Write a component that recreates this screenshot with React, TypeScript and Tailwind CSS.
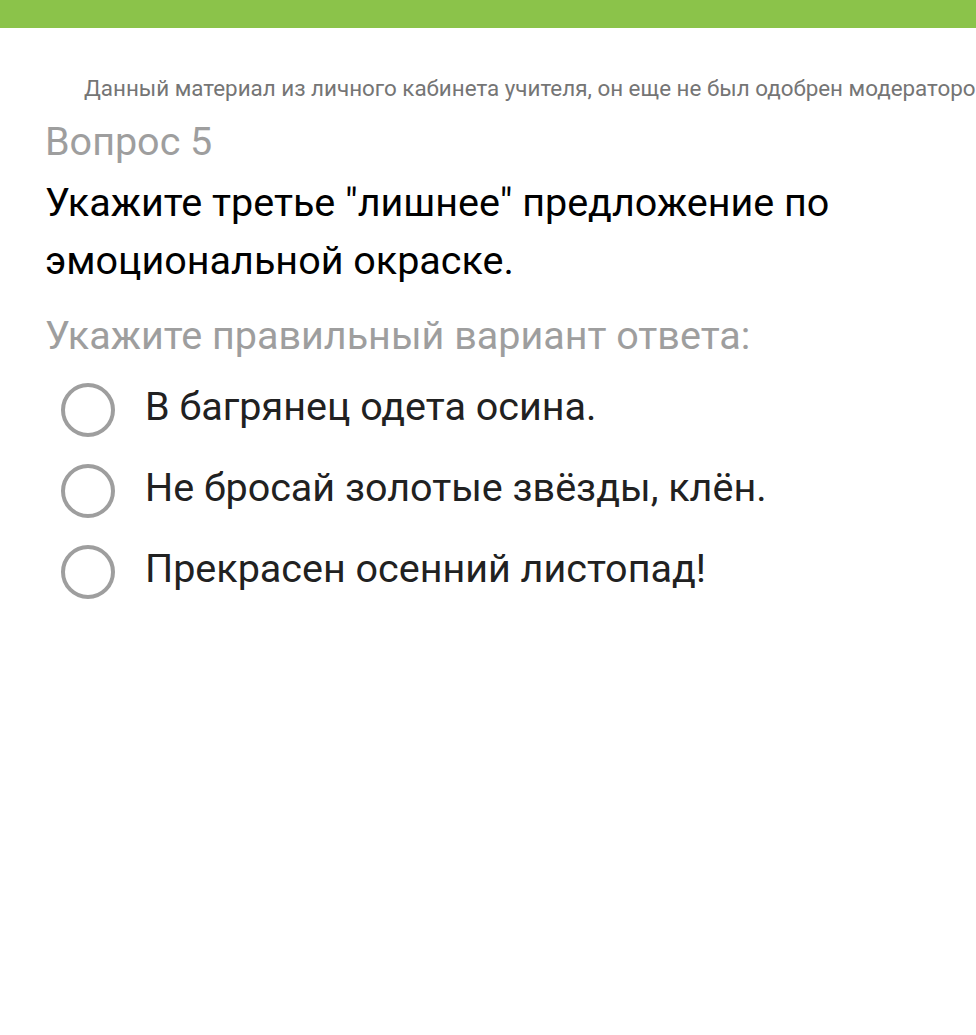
import React from "react";

const options = [
  "В багрянец одета осина.",
  "Не бросай золотые звёзды, клён.",
  "Прекрасен осенний листопад!",
];

export default function App() {
  return (
    <div className="min-h-[1035px] w-[976px] overflow-hidden bg-white" style={{ fontFamily: "Roboto, 'Noto Sans', sans-serif" }}>
      <div className="h-[28px] bg-[#8bc34a]" />
      <div className="mt-[45px] whitespace-nowrap pl-[84px] text-[22.4px] leading-[30px] text-[#757575]">
        Данный материал из личного кабинета учителя, он еще не был одобрен модератором
      </div>
      <div className="px-[45px]">
        <div className="mt-[15px] text-[39.5px] leading-[48px] text-[#9e9e9e]">Вопрос 5</div>
        <div className="mt-[8px] text-[39.5px] leading-[58px] text-black">
          Укажите третье "лишнее" предложение по эмоциональной окраске.
        </div>
        <div className="mt-[22px] text-[39.5px] leading-[48px] text-[#9e9e9e]">Укажите правильный вариант ответа:</div>
        <div className="mt-[20px] flex flex-col gap-[24px] pl-[16px]">
          {options.map((o) => (
            <div key={o} className="flex items-start gap-[30px]">
              <div className="mt-[3px] h-[54px] w-[54px] shrink-0 rounded-full border-[4px] border-[#9e9e9e]" />
              <div className="text-[39.5px] leading-[54px] text-[#212121]">{o}</div>
            </div>
          ))}
        </div>
      </div>
    </div>
  );
}
